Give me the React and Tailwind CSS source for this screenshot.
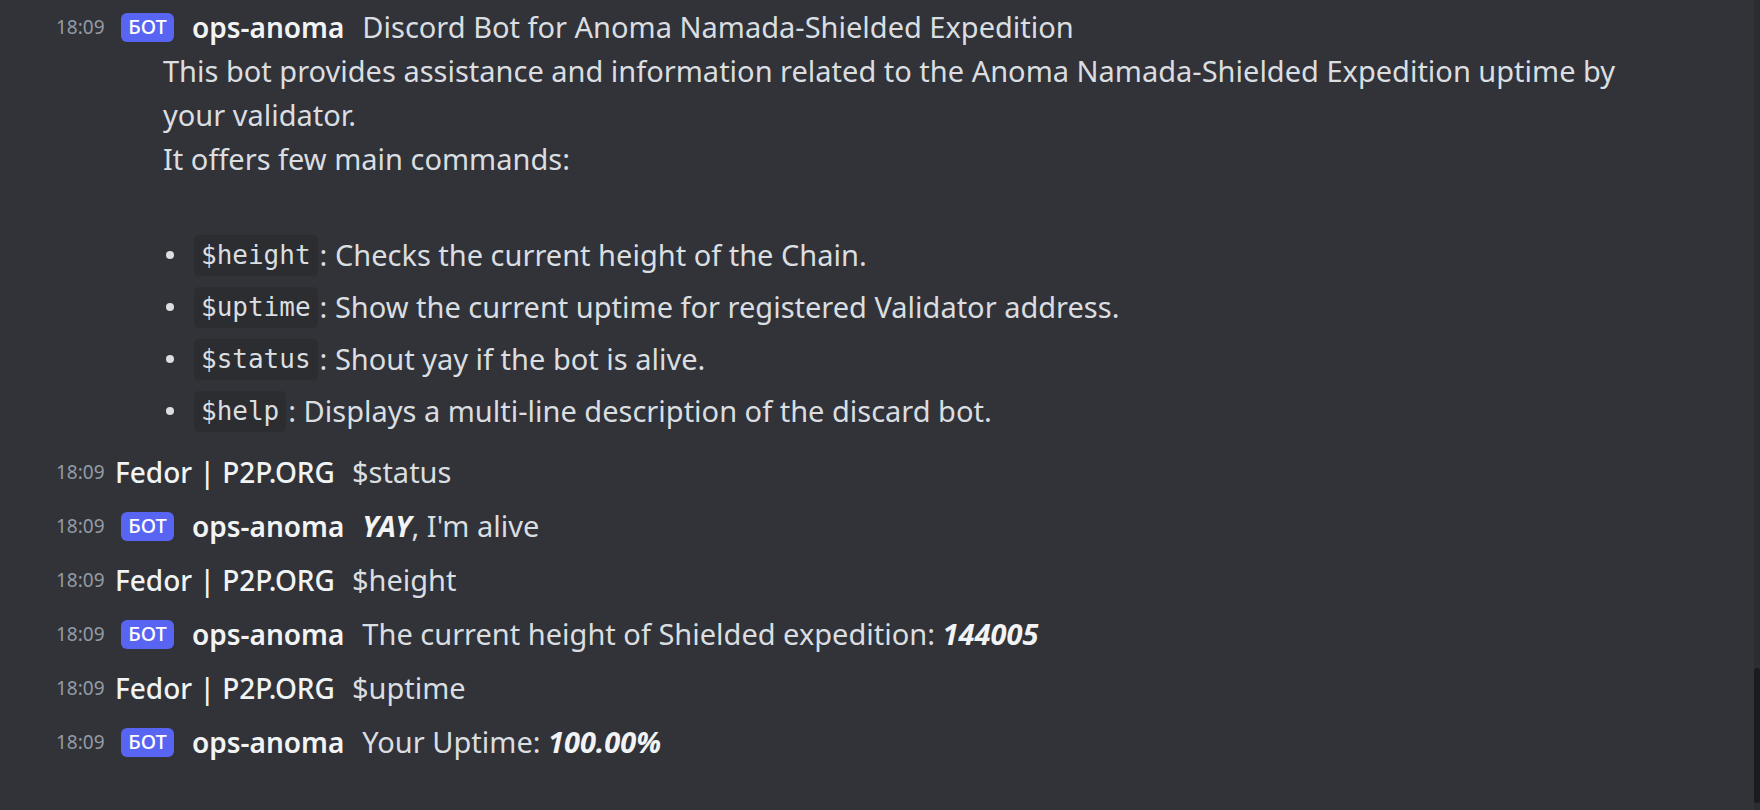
const time = "18:09";

function Time() {
  return <span className="w-[50px] shrink-0 text-[19px] text-[#949ba4]">{time}</span>;
}

function BotBadge() {
  return (
    <span className="ml-[15px] flex h-[29px] w-[53px] shrink-0 items-center justify-center rounded-[6px] bg-[#5865f2] text-[20px] font-medium text-white">
      БОТ
    </span>
  );
}

function BotRow({ children }) {
  return (
    <div className="flex h-[54px] items-center pl-[56px]">
      <Time />
      <BotBadge />
      <span className="ml-[18px] text-[28px] font-semibold text-[#f2f3f5]">ops-anoma</span>
      <span className="ml-[18px]">{children}</span>
    </div>
  );
}

function UserRow({ children }) {
  return (
    <div className="flex h-[54px] items-center pl-[56px]">
      <Time />
      <span className="ml-[9px] text-[28px] font-medium text-[#f2f3f5]">Fedor | P2P.ORG</span>
      <span className="ml-[17px]">{children}</span>
    </div>
  );
}

function Cmd({ name, text }) {
  return (
    <li className="flex h-[52px] items-center">
      <span className="ml-[3px] h-[8px] w-[8px] rounded-full bg-[#dbdee1]"></span>
      <code className="ml-[20px] rounded-[5px] bg-[#2b2d31] px-[7px] py-[3px] font-['DejaVu_Sans_Mono',monospace] text-[26px] leading-[35px]">
        {name}
      </code>
      <span className="ml-[2px]">: {text}</span>
    </li>
  );
}

export default function App() {
  return (
    <div className="flex h-[810px] w-[1760px] overflow-hidden bg-[#313338] font-['Noto_Sans',sans-serif] text-[29px] leading-[44px] text-[#dbdee1]">
      <div className="flex-1 pt-[5px]">
        <div className="flex h-[44px] items-center pl-[56px]">
          <Time />
          <BotBadge />
          <span className="ml-[18px] text-[28px] font-semibold text-[#f2f3f5]">ops-anoma</span>
          <span className="ml-[18px]">Discord Bot for Anoma Namada-Shielded Expedition</span>
        </div>
        <div className="pl-[163px]">
          <div>This bot provides assistance and information related to the Anoma Namada-Shielded Expedition uptime by</div>
          <div>your validator.</div>
          <div>It offers few main commands:</div>
          <div className="h-[44px]"></div>
          <ul className="mt-[4px]">
            <Cmd name="$height" text="Checks the current height of the Chain." />
            <Cmd name="$uptime" text="Show the current uptime for registered Validator address." />
            <Cmd name="$status" text="Shout yay if the bot is alive." />
            <Cmd name="$help" text="Displays a multi-line description of the discard bot." />
          </ul>
        </div>
        <div className="mt-[8px]">
          <UserRow>$status</UserRow>
          <BotRow>
            <b className="font-bold italic text-[#f2f3f5]">YAY</b>, I'm alive
          </BotRow>
          <UserRow>$height</UserRow>
          <BotRow>
            The current height of Shielded expedition: <b className="font-bold italic text-[#f2f3f5]">144005</b>
          </BotRow>
          <UserRow>$uptime</UserRow>
          <BotRow>
            Your Uptime: <b className="font-bold italic text-[#f2f3f5]">100.00%</b>
          </BotRow>
        </div>
      </div>
      <div className="flex w-[6px] flex-col justify-end bg-[#2b2d31] pb-[7px]">
        <div className="h-[135px] rounded-full bg-[#1a1b1e]"></div>
      </div>
    </div>
  );
}
